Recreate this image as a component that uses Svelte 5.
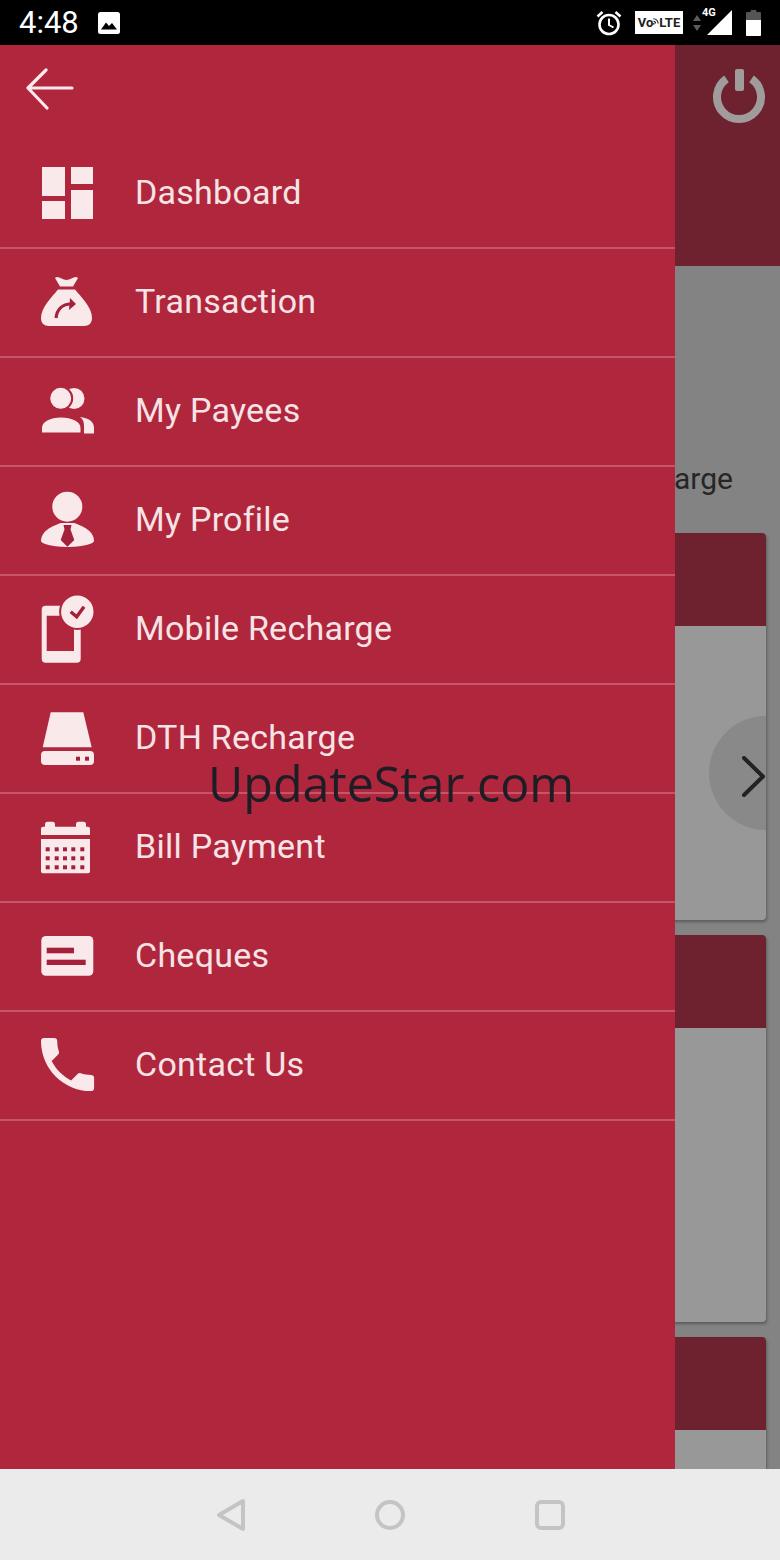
<script>
  const menu = [
    { label: 'Dashboard', icon: 'dashboard' },
    { label: 'Transaction', icon: 'bag' },
    { label: 'My Payees', icon: 'payees' },
    { label: 'My Profile', icon: 'profile' },
    { label: 'Mobile Recharge', icon: 'mobile' },
    { label: 'DTH Recharge', icon: 'drive' },
    { label: 'Bill Payment', icon: 'calendar' },
    { label: 'Cheques', icon: 'cheque' },
    { label: 'Contact Us', icon: 'call' }
  ];

  const calX = [9.7, 18.7, 27, 35.3, 44.3];
  const calY = [33.3, 42.3, 51.3];
</script>

<div class="phone">
  <header class="status">
    <span class="time">4:48</span>
    <svg class="pic" width="22" height="22" viewBox="0 0 22 22">
      <rect x="0" y="0" width="22" height="22" rx="2.5" fill="#fff" />
      <path d="M3 17.5 L8 10.5 L11 14 L14 11 L19 17.5 Z" fill="#000" />
    </svg>
    <div class="status-right">
      <svg width="30" height="28" viewBox="0 0 30 28" fill="none" stroke="#fff">
        <circle cx="15" cy="15.5" r="9.5" stroke-width="2.6" />
        <path d="M15 9.5 V16 L19.5 18.5" stroke-width="2" />
        <path d="M3.5 7.5 L8.5 3 M26.5 7.5 L21.5 3" stroke-width="2.6" />
      </svg>
      <div class="volte">
        <span>Vo</span>
        <svg width="6" height="14" viewBox="0 0 7 14" fill="none" stroke="#222" stroke-width="1.3">
          <path d="M0.5 2 A5.5 5.5 0 0 1 6 7.5 M0.5 5 A2.5 2.5 0 0 1 3 7.5" />
          <circle cx="1" cy="8" r="1" fill="#222" stroke="none" />
        </svg>
        <span>LTE</span>
      </div>
      <svg class="updown" width="10" height="20" viewBox="0 0 10 20">
        <path d="M5 2 L9 8 H1 Z M5 18 L1 12 H9 Z" fill="#5c5c5c" />
      </svg>
      <div class="signal">
        <span class="four-g">4G</span>
        <svg width="25" height="25" viewBox="0 0 25 25">
          <path d="M25 0 V25 H0 Z" fill="#fff" />
        </svg>
      </div>
      <svg class="battery" width="15" height="26" viewBox="0 0 16 26" preserveAspectRatio="none">
        <path d="M5 0 H11 V2 H15 a1 1 0 0 1 1 1 V25 a1 1 0 0 1 -1 1 H1 a1 1 0 0 1 -1 -1 V3 a1 1 0 0 1 1 -1 H5 Z" fill="#555" />
        <path d="M0 10 H16 V25 a1 1 0 0 1 -1 1 H1 a1 1 0 0 1 -1 -1 Z" fill="#fff" />
      </svg>
    </div>
  </header>

  <main class="main">
    <div class="backdrop">
      <div class="top-band">
        <svg class="power" width="60" height="60" viewBox="0 0 60 60" fill="none" stroke="#a09c9c">
          <path d="M17.5 10.9 A22 22 0 1 0 42.5 10.9" stroke-width="8" />
          <rect x="26" y="1" width="9" height="22" rx="2" fill="#a09c9c" stroke="none" />
        </svg>
      </div>
      <div class="recharge-label">Mobile Recharge</div>
      <div class="cards">
        <section class="card">
          <div class="card-head"></div>
          <div class="card-body">
            <div class="next">
              <svg width="24" height="42" viewBox="0 0 24 42" fill="none" stroke="#222" stroke-width="4" stroke-linecap="round" stroke-linejoin="round">
                <path d="M2 2 L21 20.5 L2 39" />
              </svg>
            </div>
          </div>
        </section>
        <section class="card">
          <div class="card-head"></div>
          <div class="card-body"></div>
        </section>
        <section class="card">
          <div class="card-head"></div>
          <div class="card-body"></div>
        </section>
      </div>
    </div>

    <aside class="drawer">
      <div class="drawer-top">
        <svg width="50" height="46" viewBox="0 0 50 46" fill="none" stroke="#fde8ea" stroke-width="3.2" stroke-linecap="round" stroke-linejoin="round">
          <path d="M2 21 H46 M20 3 L2 21 L21 41" />
        </svg>
      </div>
      <ul class="menu">
        {#each menu as item}
          <li class="item">
            <svg class="icon" width="60" height="70" viewBox="0 -5 60 70">
              {#if item.icon === 'dashboard'}
                <rect x="4" y="5" width="23" height="29" />
                <rect x="33" y="5" width="22" height="17" />
                <rect x="4" y="39" width="23" height="18" />
                <rect x="33" y="28" width="22" height="29" />
              {:else if item.icon === 'bag'}
                <path d="M17 7 C20 4 24 9 28.5 9 C33 9 37 4 40 7 L35 15.5 H22 Z" />
                <path d="M20 18.5 H37 C43 26 54 36 54 47 C54 52 51 55 46 55 H11 C6 55 3 52 3 47 C3 36 14 26 20 18.5 Z" />
                <path class="cut" d="M18 47 C19 39 24 33 33 33" fill="none" stroke-width="3.2" />
                <path class="cut-fill" d="M32 27 L38 33 L31 39 Z" />
              {:else if item.icon === 'payees'}
                <circle cx="36" cy="18.5" r="10.5" />
                <path d="M42 37 C50 38 56 41 56 48 V53.5 H46 V46 C46 42 45 39 42 37 Z" />
                <circle class="ring" cx="22.7" cy="18.3" r="11.5" />
                <path class="ring" d="M3 53.5 V48 C3 41 12 36.5 23 36.5 C34 36.5 43.5 41 43.5 48 V53.5 Z" />
              {:else if item.icon === 'profile'}
                <circle cx="29.3" cy="17.7" r="15" />
                <path d="M3 52 C3 42 14 37 23 34 H36 C45 37 56 42 56 52 C56 55 42 58 29.5 58 C17 58 3 55 3 52 Z" />
                <path class="cut-fill" d="M25.5 36 H33.5 L32.5 40.5 L36.3 51 L29.4 57.7 L22.7 51 L26.5 40.5 Z" />
              {:else if item.icon === 'mobile'}
                <path fill-rule="evenodd" d="M7.7 7.7 H38.7 A4 4 0 0 1 42.7 11.7 V60.7 A4 4 0 0 1 38.7 64.7 H7.7 A4 4 0 0 1 3.7 60.7 V11.7 A4 4 0 0 1 7.7 7.7 Z M8.7 17.7 V53 H36 V17.7 Z" />
                <circle class="ring" cx="39.3" cy="13.7" r="17.2" />
                <path class="cut" d="M32.7 13.7 L38.7 18.7 L46 8.7" fill="none" stroke-width="3.4" />
              {:else if item.icon === 'drive'}
                <path d="M12.7 5.3 H45.3 L53.7 40.3 H4.7 Z" />
                <rect x="3" y="44" width="53" height="14" rx="4" />
                <rect class="cut-fill" x="38" y="49.7" width="4" height="4" />
                <rect class="cut-fill" x="47" y="49.7" width="4" height="4" />
              {:else if item.icon === 'calendar'}
                <path d="M3 12.5 Q3 10.7 5 10.7 H7 V8 Q7 5.7 9.5 5.7 H14.5 Q17 5.7 17 8 V10.7 H38 V8 Q38 5.7 40.5 5.7 H45.5 Q48 5.7 48 8 V10.7 H50 Q52 10.7 52 12.5 V19 H3 Z" />
                <path d="M3 23 H52 V55.5 Q52 57.3 50 57.3 H5 Q3 57.3 3 55.5 Z" />
                {#each calY as y}
                  {#each calX as x}
                    <rect class="cut-fill" x={x - 2} y={y - 2} width="4" height="4" />
                  {/each}
                {/each}
              {:else if item.icon === 'cheque'}
                <rect x="3.3" y="11" width="52" height="39.7" rx="4.5" />
                <rect class="cut-fill" x="8.7" y="22.7" width="27.3" height="5.6" />
                <rect class="cut-fill" x="8.7" y="34.7" width="39" height="5.3" />
              {:else if item.icon === 'call'}
                <g transform="translate(-5.85 -4.85) scale(2.95)">
                  <path d="M6.62 10.79c1.44 2.83 3.76 5.14 6.59 6.59l2.2-2.2c.27-.27.67-.36 1.02-.24 1.12.37 2.33.57 3.57.57.55 0 1 .45 1 1V20c0 .55-.45 1-1 1-9.39 0-17-7.61-17-17 0-.55.45-1 1-1h3.5c.55 0 1 .45 1 1 0 1.25.2 2.45.57 3.57.11.35.03.74-.25 1.02l-2.2 2.2z" />
                </g>
              {/if}
            </svg>
            <span class="label">{item.label}</span>
          </li>
        {/each}
      </ul>
    </aside>

    <div class="watermark">UpdateStar.com</div>
  </main>

  <footer class="nav">
    <svg width="32" height="34" viewBox="0 0 32 34" fill="none" stroke="#c4c4c4" stroke-width="4" stroke-linejoin="round">
      <path d="M5 17 L29 3 V31 Z" />
    </svg>
    <svg width="32" height="34" viewBox="0 0 32 34" fill="none" stroke="#c4c4c4" stroke-width="4">
      <circle cx="16" cy="17" r="13" />
    </svg>
    <svg width="32" height="34" viewBox="0 0 32 34" fill="none" stroke="#c4c4c4" stroke-width="4">
      <rect x="3" y="4" width="26" height="26" rx="4" />
    </svg>
  </footer>
</div>

<style>
  :global(body) {
    margin: 0;
    background: #000;
  }

  .phone {
    width: 780px;
    height: 1560px;
    display: flex;
    flex-direction: column;
    overflow: hidden;
    font-family: Roboto, "Liberation Sans", sans-serif;
  }

  .status {
    height: 45px;
    flex: none;
    background: #000;
    color: #fff;
    display: flex;
    align-items: center;
    padding: 0 19px;
    box-sizing: border-box;
  }

  .time {
    font-size: 31px;
    line-height: 45px;
    width: 79px;
  }

  .status-right {
    margin-left: auto;
    display: flex;
    align-items: center;
  }

  .volte {
    margin-left: 11px;
    width: 48px;
    height: 23px;
    background: #fff;
    color: #222;
    font-size: 13px;
    font-weight: 700;
    line-height: 23px;
    display: flex;
    align-items: center;
    justify-content: center;
  }

  .updown {
    margin-left: 9px;
  }

  .signal {
    position: relative;
    margin-left: 5px;
    height: 25px;
  }

  .four-g {
    position: absolute;
    left: -5px;
    top: -3px;
    font-size: 11px;
    font-weight: 700;
    line-height: 12px;
  }

  .battery {
    margin-left: 14px;
  }

  .main {
    flex: 1;
    position: relative;
    min-height: 0;
    overflow: hidden;
  }

  .backdrop {
    height: 100%;
    background: #838383;
  }

  .top-band {
    height: 221px;
    background: #6e2230;
    display: flex;
    justify-content: flex-end;
    padding: 23px 11px 0 0;
    box-sizing: border-box;
  }

  .recharge-label {
    height: 267px;
    box-sizing: border-box;
    padding: 193px 47px 0 0;
    text-align: right;
    font-size: 30px;
    line-height: 40px;
    color: #262626;
  }

  .cards {
    display: flex;
    flex-direction: column;
    gap: 15px;
    padding: 0 14px;
  }

  .card {
    flex: none;
    height: 387px;
    border-radius: 4px;
    overflow: hidden;
    box-shadow: 1px 2px 3px rgba(0, 0, 0, 0.3);
    background: #979897;
  }

  .card-head {
    height: 93px;
    background: #6e2230;
  }

  .card-body {
    position: relative;
    height: 294px;
    overflow: hidden;
  }

  .next {
    position: absolute;
    right: -57px;
    top: 90px;
    width: 114px;
    height: 114px;
    border-radius: 50%;
    background: #888988;
    display: flex;
    align-items: center;
    padding: 8px 0 0 33px;
    box-sizing: border-box;
  }

  .drawer {
    position: absolute;
    left: 0;
    top: 0;
    bottom: 0;
    width: 675px;
    background: #b0263c;
    display: flex;
    flex-direction: column;
  }

  .drawer-top {
    height: 95px;
    flex: none;
    box-sizing: border-box;
    padding: 22px 0 0 26px;
  }

  .menu {
    list-style: none;
    margin: 0;
    padding: 0;
  }

  .item {
    height: 109px;
    box-sizing: border-box;
    padding: 0 0 3px 38px;
    border-bottom: 2px solid #c65567;
    display: flex;
    align-items: center;
    gap: 37px;
  }

  .icon {
    flex: none;
    fill: #f9e9eb;
    stroke: none;
  }

  .icon .cut {
    stroke: #a5203a;
  }

  .icon .cut-fill {
    fill: #a5203a;
  }

  .icon .ring {
    stroke: #b0263c;
    stroke-width: 2;
  }

  .label {
    font-size: 34px;
    letter-spacing: 0.25px;
    line-height: 40px;
    color: #f6e3e6;
  }

  .watermark {
    position: absolute;
    left: 208px;
    top: 706px;
    font-family: "Open Sans", sans-serif;
    font-size: 48.4px;
    line-height: 64px;
    color: #1d1d26;
    white-space: nowrap;
  }

  .nav {
    height: 91px;
    flex: none;
    background: #ebebeb;
    display: flex;
    align-items: center;
    justify-content: center;
    gap: 128px;
  }
</style>
